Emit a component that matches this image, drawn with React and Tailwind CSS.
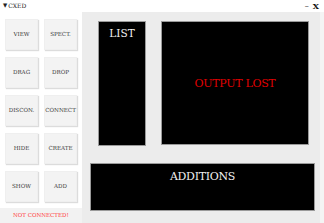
import React from 'react';

const buttons = [
  ['VIEW', 'SPECT.'],
  ['DRAG', 'DROP'],
  ['DISCON.', 'CONNECT'],
  ['HIDE', 'CREATE'],
  ['SHOW', 'ADD'],
];

const serif = { fontFamily: '"DejaVu Serif", "Liberation Serif", serif' };

const App = () => {
  return (
    <div className="w-[324px] h-[223px] bg-[#f4f4f4] flex flex-col overflow-hidden" style={serif}>
      {/* title bar */}
      <div className="h-[12px] bg-white flex items-center justify-between pl-[3px] pr-[5px]">
        <div className="flex items-center text-[6px] text-[#222] leading-none">
          <span className="text-[5.5px] mr-[1px] font-bold">▼</span>
          <span>CXED</span>
        </div>
        <div className="flex items-center gap-[4px] text-[8px] text-[#111] leading-none font-bold">
          <span className="font-normal">–</span>
          <span>X</span>
        </div>
      </div>

      <div className="flex flex-1">
        {/* left column */}
        <div className="w-[82px] flex flex-col">
          <div className="h-[196px] bg-white pl-[5px] pt-[7px] flex flex-col gap-[7px]">
            {buttons.map((row, i) => (
              <div key={i} className="flex gap-[6px]">
                {row.map((label) => (
                  <div
                    key={label}
                    className="w-[33px] h-[31px] bg-[#f3f3f3] border border-[#efefef] shadow-[1px_1px_1px_#dcdcdc] flex items-center justify-center text-[5.6px] text-[#3a3a3a] leading-none"
                  >
                    {label}
                  </div>
                ))}
              </div>
            ))}
          </div>
          <div className="flex-1 bg-[#f2f2f2] flex items-center pl-[13px] pt-[1px]">
            <span className="text-[5.5px] text-[#ff3b3b] leading-none">NOT CONNECTED!</span>
          </div>
        </div>

        {/* right panel */}
        <div className="w-[238px] bg-[#ececec] pt-[9px]">
          <div className="flex pl-[16px] gap-[15px]">
            <div className="w-[48px] h-[125px] bg-black border border-[#9a9a9a] flex justify-center pt-[6px]">
              <span className="text-[10.5px] text-[#f2f2f2] leading-none">LIST</span>
            </div>
            <div className="w-[148px] h-[124px] bg-black border border-[#9a9a9a] flex items-center justify-center">
              <span className="text-[11px] tracking-[-0.3px] text-[#e00000] leading-none">OUTPUT LOST</span>
            </div>
          </div>
          <div className="ml-[8px] mt-[17px] w-[225px] h-[48px] bg-black border border-[#9a9a9a] flex justify-center pt-[7px]">
            <span className="text-[11px] tracking-[-0.3px] text-[#f0f0f0] leading-none">ADDITIONS</span>
          </div>
        </div>
      </div>
    </div>
  );
};

export default App;
